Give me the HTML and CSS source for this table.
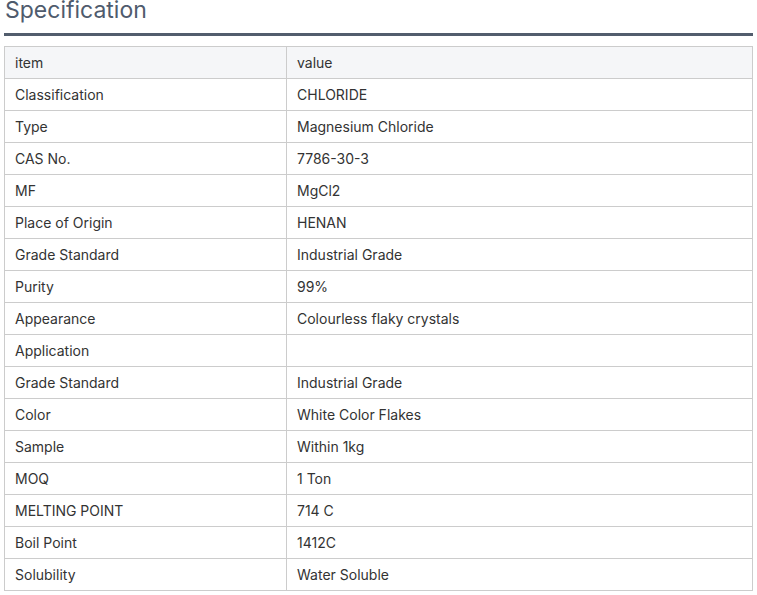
FILE: index.html
```html
<!DOCTYPE html>
<html>
<head>
<meta charset="utf-8">
<link rel="stylesheet" href="styles.css">
</head>
<body>
<div class="spec">
  <h2 class="spec-title">Specification</h2>
  <table class="spec-table">
    <thead>
      <tr><th>item</th><th>value</th></tr>
    </thead>
    <tbody>
      <tr><td>Classification</td><td>CHLORIDE</td></tr>
      <tr><td>Type</td><td>Magnesium Chloride</td></tr>
      <tr><td>CAS No.</td><td>7786-30-3</td></tr>
      <tr><td>MF</td><td>MgCl2</td></tr>
      <tr><td>Place of Origin</td><td>HENAN</td></tr>
      <tr><td>Grade Standard</td><td>Industrial Grade</td></tr>
      <tr><td>Purity</td><td>99%</td></tr>
      <tr><td>Appearance</td><td>Colourless flaky crystals</td></tr>
      <tr><td>Application</td><td></td></tr>
      <tr><td>Grade Standard</td><td>Industrial Grade</td></tr>
      <tr><td>Color</td><td>White Color Flakes</td></tr>
      <tr><td>Sample</td><td>Within 1kg</td></tr>
      <tr><td>MOQ</td><td>1 Ton</td></tr>
      <tr><td>MELTING POINT</td><td>714 C</td></tr>
      <tr><td>Boil Point</td><td>1412C</td></tr>
      <tr><td>Solubility</td><td>Water Soluble</td></tr>
    </tbody>
  </table>
</div>
</body>
</html>
```
FILE: styles.css
```css
html, body {
  margin: 0;
  padding: 0;
  background: #ffffff;
}
.spec {
  padding: 0 4px 0 4px;
  width: 749px;
  font-family: Inter, "Noto Sans", sans-serif;
}
.spec-title {
  margin: 0;
  font-size: 23px;
  font-weight: 400;
  line-height: 21px;
  color: #4f5b6d;
  padding: 0 0 12px 1px;
  border-bottom: 3px solid #525d6d;
  margin-bottom: 10px;
}
.spec-table {
  width: 100%;
  border-collapse: collapse;
  border: 1px solid #cccccc;
  font-size: 14px;
  color: #333333;
}
.spec-table th,
.spec-table td {
  border: 1px solid #cccccc;
  height: 32px;
  padding: 0 10px;
  text-align: left;
  font-weight: 400;
  vertical-align: middle;
  box-sizing: border-box;
}
.spec-table th:first-child,
.spec-table td:first-child {
  width: 282px;
}
.spec-table thead th {
  background: #f5f6f8;
}
```
